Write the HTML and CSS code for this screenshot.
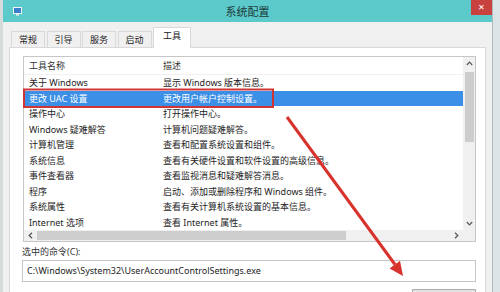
FILE: index.html
```html
<!DOCTYPE html>
<html lang="zh-CN">
<head>
    <meta charset="UTF-8">
    <title>系统配置</title>
    <link rel="stylesheet" href="styles.css">
</head>
<body>
    <div class="window">
        <div class="titlebar">
            <svg class="app-icon" width="9" height="9" viewBox="0 0 9 9">
                <rect x="0.5" y="0.5" width="8" height="6" fill="#3b7fcc" stroke="#eef5f8"/>
                <rect x="3" y="7" width="3" height="1.5" fill="#e3ecf0"/>
            </svg>
            <div class="title">系统配置</div>
            <div class="close-btn">×</div>
        </div>

        <div class="tabs">
            <div class="tab">常规</div>
            <div class="tab">引导</div>
            <div class="tab">服务</div>
            <div class="tab">启动</div>
            <div class="tab active">工具</div>
        </div>

        <div class="panel">
            <div class="listbox">
                <div class="list-main">
                    <div class="list-row list-header"><div class="col-name">工具名称</div><div class="col-desc">描述</div></div>
                    <div class="list-row"><div class="col-name">关于 Windows</div><div class="col-desc">显示 Windows 版本信息。</div></div>
                    <div class="list-row selected"><div class="col-name">更改 UAC 设置</div><div class="col-desc">更改用户帐户控制设置。</div></div>
                    <div class="list-row"><div class="col-name">操作中心</div><div class="col-desc">打开操作中心。</div></div>
                    <div class="list-row"><div class="col-name">Windows 疑难解答</div><div class="col-desc">计算机问题疑难解答。</div></div>
                    <div class="list-row"><div class="col-name">计算机管理</div><div class="col-desc">查看和配置系统设置和组件。</div></div>
                    <div class="list-row"><div class="col-name">系统信息</div><div class="col-desc">查看有关硬件设置和软件设置的高级信息。</div></div>
                    <div class="list-row"><div class="col-name">事件查看器</div><div class="col-desc">查看监视消息和疑难解答消息。</div></div>
                    <div class="list-row"><div class="col-name">程序</div><div class="col-desc">启动、添加或删除程序和 Windows 组件。</div></div>
                    <div class="list-row"><div class="col-name">系统属性</div><div class="col-desc">查看有关计算机系统设置的基本信息。</div></div>
                    <div class="list-row"><div class="col-name">Internet 选项</div><div class="col-desc">查看 Internet 属性。</div></div>
                </div>

                <div class="vscroll">
                    <div class="sb-btn">
                        <svg width="7" height="5" viewBox="0 0 7 5"><path d="M0.8 4 L3.5 1.2 L6.2 4" fill="none" stroke="#555" stroke-width="1.2"/></svg>
                    </div>
                    <div class="vthumb"></div>
                    <div class="sb-fill"></div>
                    <div class="sb-btn">
                        <svg width="7" height="5" viewBox="0 0 7 5"><path d="M0.8 1 L3.5 3.8 L6.2 1" fill="none" stroke="#555" stroke-width="1.2"/></svg>
                    </div>
                </div>

                <div class="hscroll">
                    <div class="sb-btn">
                        <svg width="5" height="7" viewBox="0 0 5 7"><path d="M4 0.8 L1.2 3.5 L4 6.2" fill="none" stroke="#555" stroke-width="1.2"/></svg>
                    </div>
                    <div class="hthumb"></div>
                    <div class="sb-fill"></div>
                    <div class="sb-btn">
                        <svg width="5" height="7" viewBox="0 0 5 7"><path d="M1 0.8 L3.8 3.5 L1 6.2" fill="none" stroke="#555" stroke-width="1.2"/></svg>
                    </div>
                </div>
                <div class="corner"></div>
            </div>

            <div class="cmd-label">选中的命令(C):</div>
            <div class="cmd-box">C:\Windows\System32\UserAccountControlSettings.exe</div>
            <div class="btn-row"><div class="launch-btn"></div></div>
        </div>
    </div>

    <!-- red markup drawn over the screenshot -->
    <svg class="annotations" width="500" height="292" viewBox="0 0 500 292">
        <rect x="24" y="89.5" width="249" height="17.5" fill="none" stroke="#cf3535" stroke-width="2"/>
        <line x1="287" y1="117" x2="395" y2="264.5" stroke="#d8322d" stroke-width="3"/>
        <polygon points="403,276 389.6,268.4 400,260.8" fill="#d8322d"/>
    </svg>
</body>
</html>
```

FILE: styles.css
```css
* {
    margin: 0;
    padding: 0;
    box-sizing: border-box;
}

body {
    font-family: "Noto Sans", "Noto Sans CJK SC", sans-serif;
    font-size: 9px;
    color: #1e1e1e;
    background: #dbe3e5;
    width: 500px;
    height: 292px;
    overflow: hidden;
    position: relative;
}

.window {
    width: 493px;
    height: 292px;
    overflow: hidden;
    background: #f0f0f0;
    border-left: 3px solid #d6dcdc;
    border-right: 1px solid #aebcbf;
}

.titlebar {
    height: 22px;
    background: #5ccaca;
    display: grid;
    grid-template-columns: 1fr auto 1fr;
    align-items: start;
}

.app-icon {
    margin: 7px 0 0 10px;
}

.title {
    font-family: "Noto Sans CJK SC", sans-serif;
    font-size: 11px;
    line-height: 23px;
    color: #1d3b3b;
}

.close-btn {
    justify-self: end;
    width: 21px;
    height: 15px;
    background: #c8413e;
    color: #fff;
    font-size: 11px;
    line-height: 14px;
    text-align: center;
}

.tabs {
    display: flex;
    align-items: flex-end;
    gap: 1.5px;
    height: 25px;
    padding-left: 8px;
}

.tab {
    height: 16px;
    padding: 0 7px;
    border: 1px solid #d9d9d9;
    border-bottom: none;
    background: #f0f0f0;
    line-height: 16px;
    color: #222;
}

.tab.active {
    height: 21px;
    padding: 0 9px;
    background: #fff;
    margin-bottom: -1px;
    position: relative;
    line-height: 15px;
}

.panel {
    margin: 0 6px;
    height: 250px;
    overflow: hidden;
    border: 1px solid #d9d9d9;
    border-bottom: none;
    background: #fff;
    padding: 8px 9px 0 12px;
}

.listbox {
    margin-left: 1px;
    height: 186px;
    border: 1px solid #c6c6c6;
    display: grid;
    grid-template-columns: 1fr 12px;
    grid-template-rows: 1fr 11px;
}

.list-main {
    overflow: hidden;
}

.list-row {
    display: flex;
    height: 15.5px;
    line-height: 15.5px;
    white-space: nowrap;
}

.list-header {
    height: 18px;
    line-height: 18px;
    border-bottom: 1px solid #f0f0f0;
    color: #333;
}

.list-row.selected {
    background: #3b8fe6;
    color: #fff;
}

.col-name {
    width: 134px;
    padding-left: 5px;
}

.col-desc {
    padding-left: 5px;
}

.vscroll,
.hscroll {
    background: #f0f0f0;
    display: flex;
}

.vscroll {
    flex-direction: column;
    align-items: center;
}

.sb-btn {
    width: 13px;
    height: 13px;
    display: flex;
    align-items: center;
    justify-content: center;
    flex-shrink: 0;
}

.vscroll .sb-btn {
    width: 12px;
}

.hscroll .sb-btn {
    height: 11px;
}

.sb-fill {
    flex: 1;
}

.vthumb {
    width: 9px;
    height: 70px;
    margin-top: 2px;
    background: #cdcdcd;
}

.hthumb {
    width: 309px;
    height: 9px;
    margin-top: 1px;
    background: #cdcdcd;
}

.corner {
    background: #f0f0f0;
}

.cmd-label {
    margin-top: 4px;
    line-height: 12px;
    color: #333;
}

.cmd-box {
    margin-top: 2px;
    height: 22px;
    border: 1px solid #c6c6c6;
    padding-left: 4px;
    line-height: 20px;
}

.btn-row {
    display: flex;
    justify-content: flex-end;
    margin-top: 7px;
}

.launch-btn {
    width: 64px;
    height: 22px;
    border: 1px solid #adadad;
    background: #e1e1e1;
}

.annotations {
    position: absolute;
    top: 0;
    left: 0;
    pointer-events: none;
}
```
